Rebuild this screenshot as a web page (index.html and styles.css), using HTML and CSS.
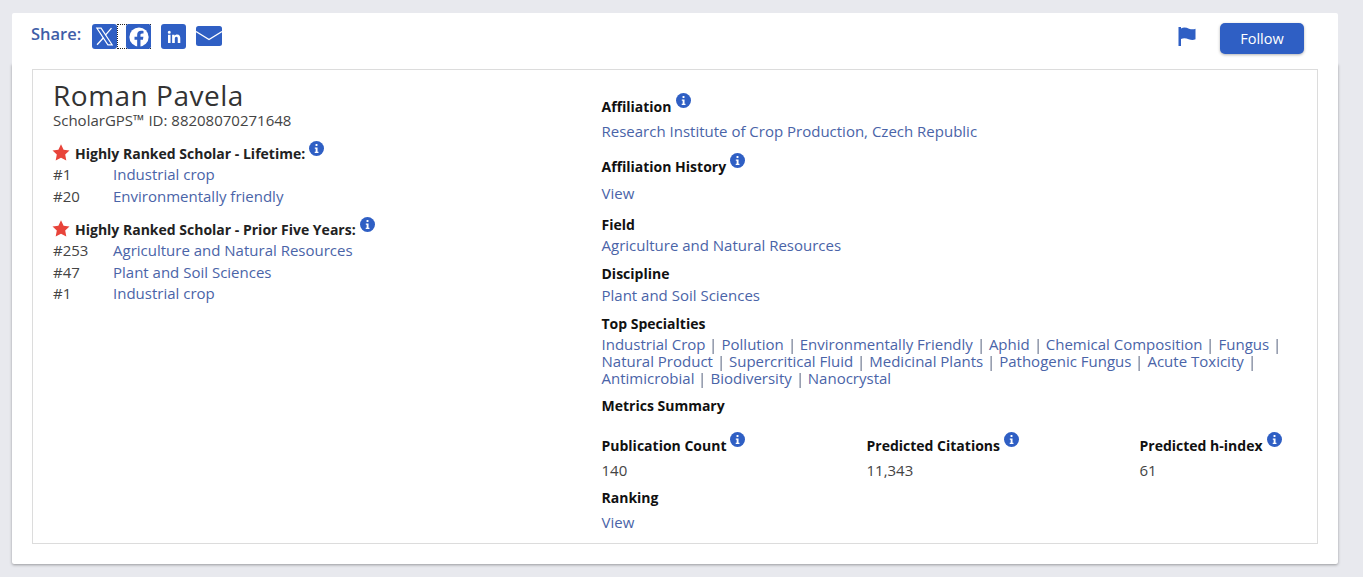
FILE: index.html
```html
<!DOCTYPE html>
<html lang="en">
<head>
<meta charset="utf-8">
<title>Roman Pavela</title>
<link rel="stylesheet" href="styles.css">
</head>
<body>
<svg class="defs" width="0" height="0" aria-hidden="true">
  <symbol id="info" viewBox="0 0 16 16"><circle cx="8" cy="8" r="8" fill="#2f5fc4"/><path fill="#fff" d="M7 3.200h2v2H7zM6.200 6.800h2.900v4.600h1v1.400H6.100v-1.400h1V8.200h-.9z"/></symbol>
  <symbol id="star" viewBox="0 0 18 17"><path fill="#e8443a" d="M9 .3l2.600 5.400 5.900.8-4.300 4.100 1.100 5.900L9 13.700l-5.300 2.800 1.100-5.900L.5 6.500l5.900-.8z"/></symbol>
</svg>
<main class="card">
  <header class="topbar">
    <div class="share">
      <span class="share-label">Share:</span>
      <a class="sicon" href="#" aria-label="X"><svg viewBox="0 0 24 24" width="21" height="21"><path fill="none" stroke="#fff" stroke-width="1.300" d="M3.200 2.500h4.900l12.700 19H15.900z"/><path fill="none" stroke="#fff" stroke-width="1.500" d="M20 2.500l-7 8M10.800 13.500l-7.300 8"/></svg></a>
      <a class="focus" href="#" aria-label="Facebook"><span class="sicon"><svg viewBox="0 0 24 24" width="22" height="22"><circle cx="12" cy="12" r="10.500" fill="#fff"/><path fill="#2f5fc4" d="M13.600 23v-8h2.700l.5-3.200h-3.200V9.900c0-.9.400-1.700 1.800-1.700h1.500V5.500s-1.300-.2-2.600-.2c-2.600 0-4.300 1.600-4.300 4.400v2.100H7.100V15H10v8z"/></svg></span></a>
      <a class="sicon sl" href="#" aria-label="LinkedIn"><svg viewBox="0 0 24 24" width="18" height="18"><path fill="#fff" d="M4 9h3.400v11H4zM5.700 3.500a2 2 0 110 4 2 2 0 010-4zM9.500 9h3.200v1.500c.5-.9 1.700-1.800 3.400-1.800 3.600 0 4.300 2.300 4.300 5.400V20H17v-5.300c0-1.300 0-2.900-1.800-2.900s-2.100 1.400-2.100 2.800V20H9.500z"/></svg></a>
      <a class="mail" href="#" aria-label="Email"><svg viewBox="0 0 26 20" width="26" height="20"><rect width="26" height="20" rx="2.500" fill="#2f5fc4"/><path fill="none" stroke="#fff" stroke-width="1.400" d="M0 5.500l13 8 13-8"/></svg></a>
    </div>
    <div class="actions">
      <a class="flag" href="#" aria-label="Flag"><svg viewBox="0 0 20 20" width="20" height="20"><path fill="#2f5fc4" d="M1.500 1h2.500v19H1.500zM4 2.500c3-1.700 5.500-.7 8 .2 2.200.7 4.300 1 6.500.1v10.500c-2.300 1-4.500.7-6.800-.1-2.500-.9-4.900-1.600-7.700-.2z"/></svg></a>
      <button class="follow" type="button">Follow</button>
    </div>
  </header>
  <div class="panel">
  <section class="profile">
    <div class="col-left">
      <h1 class="name">Roman Pavela</h1>
      <p class="sid">ScholarGPS™ ID: 88208070271648</p>
      <h2 class="rank-title first"><svg class="star"><use href="#star"/></svg>Highly Ranked Scholar - Lifetime:<svg class="info"><use href="#info"/></svg></h2>
      <div class="rank"><span>#1</span><a href="#">Industrial crop</a></div>
      <div class="rank"><span>#20</span><a href="#">Environmentally friendly</a></div>
      <h2 class="rank-title second"><svg class="star"><use href="#star"/></svg>Highly Ranked Scholar - Prior Five Years:<svg class="info"><use href="#info"/></svg></h2>
      <div class="rank"><span>#253</span><a href="#">Agriculture and Natural Resources</a></div>
      <div class="rank"><span>#47</span><a href="#">Plant and Soil Sciences</a></div>
      <div class="rank"><span>#1</span><a href="#">Industrial crop</a></div>
    </div>
    <div class="col-right">
      <h3 class="lab l-aff">Affiliation<svg class="info"><use href="#info"/></svg></h3>
      <p class="val v-aff"><a href="#">Research Institute of Crop Production, Czech Republic</a></p>
      <h3 class="lab l-his">Affiliation History<svg class="info"><use href="#info"/></svg></h3>
      <p class="val v-his"><a href="#">View</a></p>
      <h3 class="lab l-fie">Field</h3>
      <p class="val v-fie"><a href="#">Agriculture and Natural Resources</a></p>
      <h3 class="lab l-dis">Discipline</h3>
      <p class="val v-dis"><a href="#">Plant and Soil Sciences</a></p>
      <h3 class="lab l-top">Top Specialties</h3>
      <p class="val specs"><a href="#">Industrial Crop</a><i>|</i><a href="#">Pollution</a><i>|</i><a href="#">Environmentally Friendly</a><i>|</i><a href="#">Aphid</a><i>|</i><a href="#">Chemical Composition</a><i>|</i><a href="#">Fungus</a><i>|</i><br><a href="#">Natural Product</a><i>|</i><a href="#">Supercritical Fluid</a><i>|</i><a href="#">Medicinal Plants</a><i>|</i><a href="#">Pathogenic Fungus</a><i>|</i><a href="#">Acute Toxicity</a><i>|</i><br><a href="#">Antimicrobial</a><i>|</i><a href="#">Biodiversity</a><i>|</i><a href="#">Nanocrystal</a></p>
      <h3 class="lab l-met">Metrics Summary</h3>
      <div class="metrics">
        <div class="m1"><h3 class="lab">Publication Count<svg class="info"><use href="#info"/></svg></h3><p class="mval">140</p></div>
        <div class="m2"><h3 class="lab">Predicted Citations<svg class="info"><use href="#info"/></svg></h3><p class="mval">11,343</p></div>
        <div class="m3"><h3 class="lab">Predicted h-index<svg class="info"><use href="#info"/></svg></h3><p class="mval">61</p></div>
      </div>
      <h3 class="lab l-ran">Ranking</h3>
      <p class="val v-ran"><a href="#">View</a></p>
    </div>
  </section>
  </div>
</main>
</body>
</html>
```
FILE: styles.css
```css
* { box-sizing: border-box; }
html, body { margin: 0; height: 577px; overflow: hidden; }
body {
  background: #e8e9ee;
  font-family: "Open Sans", sans-serif;
  font-size: 15px;
  color: #444;
  padding: 13px 25px 13px 12px;
}
.defs { position: absolute; }
a { color: #4a64a8; text-decoration: none; }
h1, h2, h3, p { margin: 0; }
.card { height: 551px; }
.topbar {
  position: relative;
  z-index: 1;
  height: 51px;
  padding: 0 20px 0 19px;
  background: #fff;
  border-radius: 2px 2px 0 0;
  display: flex;
  justify-content: space-between;
}
.panel {
  height: 500px;
  padding: 5px 20px 0;
  background: #fff;
  box-shadow: 0 1px 3px rgba(0, 0, 0, .35);
  border-radius: 0 0 2px 2px;
}
.share { display: flex; align-items: flex-start; padding-top: 11px; }
.share-label { color: #3f5ea8; font-weight: 600; font-size: 16.500px; line-height: 20px; width: 61px; }
.sicon {
  width: 25px; height: 25px;
  background: #2f5fc4; border-radius: 3px;
  display: flex; align-items: center; justify-content: center;
  flex: none;
}
.focus { display: flex; justify-content: flex-end; width: 34px; height: 25px; border: 1px dotted #222; }
.focus .sicon { margin: -1px; }
.sl { margin-left: 10px; }
.mail { margin-left: 10px; margin-top: 2px; display: block; height: 20px; }
.mail svg, .flag svg { display: block; }
.actions { display: flex; align-items: flex-start; padding: 10px 14px 0 0; }
.flag { margin: 3px 23px 0 0; }
.follow {
  width: 84px; height: 31px; border: 0; border-radius: 5px;
  background: #2f5fc4; color: #fff;
  font: 400 14.500px "Open Sans", sans-serif;
  box-shadow: 0 1px 3px rgba(0, 0, 0, .3);
}
.profile {
  height: 475px;
  border: 1px solid #dcdcdc;
  display: grid;
  grid-template-columns: 548.500px 1fr;
  padding: 0 20px;
}
.name { font-size: 28px; font-weight: 400; line-height: 32px; margin-top: 9px; color: #333; letter-spacing: .5px; }
.sid { line-height: 16px; margin-top: 1px; }
.rank-title { font-size: 14px; font-weight: 700; color: #222; line-height: 20px; display: flex; align-items: flex-start; }
.rank-title.first { margin-top: 16px; }
.rank-title.second { margin-top: 13px; }
.star { width: 18px; height: 17px; margin: 0 5px 0 -1px; }
.info { width: 15px; height: 15px; margin-left: 4px; vertical-align: 4px; flex: none; }
.rank-title .info { margin: -3px 0 0 4px; }
.rank { display: flex; line-height: 21.500px; }
.rank span { width: 60px; flex: none; }
.col-right { padding-top: 23px; }
.lab { font-size: 14px; font-weight: 700; color: #111; line-height: 20px; }
.val { line-height: 20px; }
.v-aff { margin-top: 4px; }
.l-his { margin-top: 12px; }
.v-his { margin-top: 6px; }
.l-fie { margin-top: 12px; }
.l-dis { margin-top: 9px; }
.v-dis { margin-top: 1px; }
.l-top { margin-top: 9px; }
.specs { line-height: 17px; margin-top: 2px; }
.specs a { white-space: nowrap; }
.specs i { display: inline-block; font-style: normal; color: #5f6b85; margin: 0 3.900px; will-change: transform; }
.l-met { margin-top: 9px; }
.metrics { display: flex; margin-top: 16px; }
.m1 { width: 265px; }
.m2 { width: 273px; }
.mval { line-height: 20px; margin-top: 4px; }
.l-ran { margin-top: 8px; }
.v-ran { margin-top: 4px; }
```
